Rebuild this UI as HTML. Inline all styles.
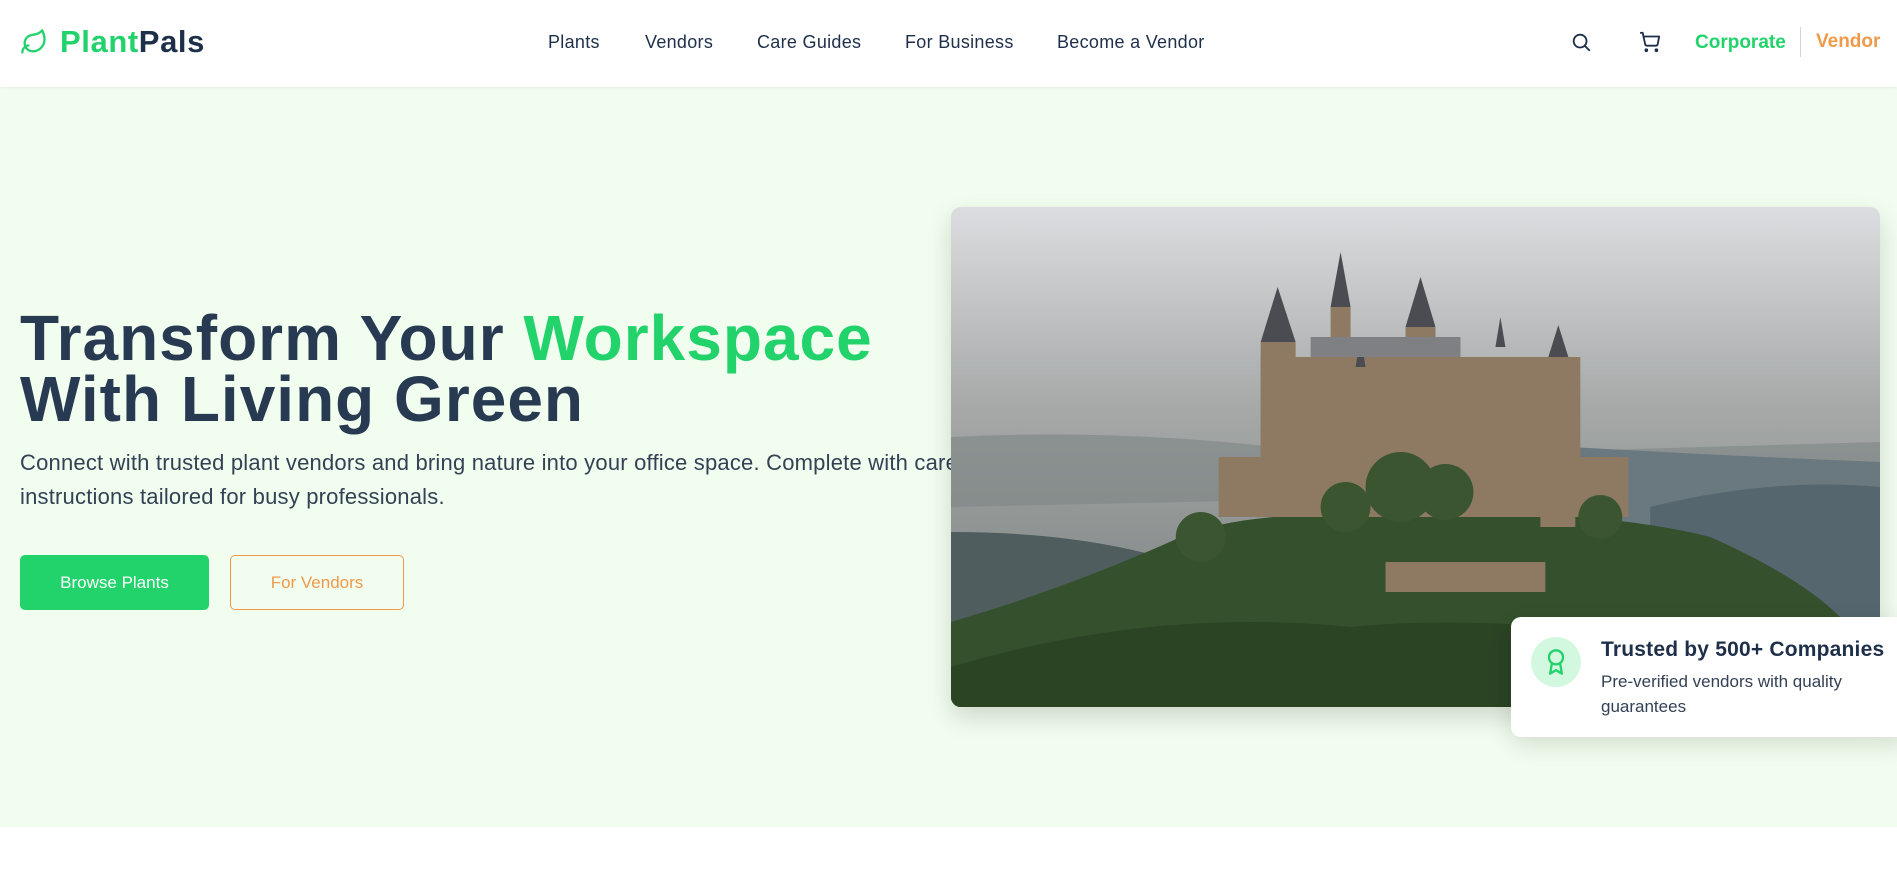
<!DOCTYPE html>
<html><head><meta charset="utf-8"><style>
*{margin:0;padding:0;box-sizing:border-box}
body{width:1897px;height:889px;overflow:hidden;background:#fff;font-family:"Liberation Sans",sans-serif;position:relative}
header{position:absolute;left:0;top:0;width:1897px;height:87px;background:#fff;box-shadow:0 1px 3px rgba(0,0,0,.06);z-index:2}
.logo{position:absolute;left:20px;top:24px;font-weight:bold;font-size:31px;color:#22d36b;letter-spacing:0.6px}
.logo span{color:#1e2f4a}
.nav a{position:absolute;top:32px;font-size:18px;color:#1e2f4a;text-decoration:none;letter-spacing:0.3px}
.hero{position:absolute;left:0;top:87px;width:1897px;height:740px;background:#f1fdee}
h1{position:absolute;left:20px;top:308px;font-size:64px;line-height:61px;color:#273a52;font-weight:bold;letter-spacing:1px}
h1 span{color:#22d36b}
p.sub{position:absolute;left:20px;top:446px;width:960px;font-size:22px;line-height:34px;color:#334155;letter-spacing:0.2px}
.btn{position:absolute;top:555px;height:55px;border-radius:5px;font-size:17px;display:flex;align-items:center;justify-content:center}
.img{position:absolute;left:951px;top:207px;width:929px;height:500px;border-radius:10px;overflow:hidden;box-shadow:0 10px 25px rgba(0,0,0,.15)}
.badge{position:absolute;left:1511px;top:617px;width:400px;height:120px;background:#fff;border-radius:10px;box-shadow:0 8px 24px rgba(0,0,0,.12)}
</style></head><body>
<header>
<svg style="position:absolute;left:20px;top:28px" width="28" height="28" viewBox="0 0 24 24" fill="none" stroke="#22d36b" stroke-width="2" stroke-linecap="round" stroke-linejoin="round"><path d="M11 20A7 7 0 0 1 9.8 6.1C15.5 5 17 4.5 19 2c1 2 2 4.2 2 8 0 5.5-4.8 10-10 10Z"/><path d="M2 21c0-3 1.9-5.4 5.2-6.1"/></svg>
<div class="logo" style="left:60px">Plant<span>Pals</span></div>
<div class="nav">
<a style="left:548px">Plants</a><a style="left:645px">Vendors</a><a style="left:757px">Care Guides</a><a style="left:905px">For Business</a><a style="left:1057px">Become a Vendor</a>
</div>
<svg style="position:absolute;left:1570px;top:31px" width="22" height="22" viewBox="0 0 24 24" fill="none" stroke="#1e2f4a" stroke-width="2" stroke-linecap="round"><circle cx="11" cy="11" r="7"/><path d="m21 21-4.3-4.3"/></svg>
<svg style="position:absolute;left:1639px;top:31px" width="22" height="22" viewBox="0 0 24 24" fill="none" stroke="#1e2f4a" stroke-width="2" stroke-linecap="round" stroke-linejoin="round"><circle cx="8" cy="21" r="1"/><circle cx="19" cy="21" r="1"/><path d="M2 2h2l2.7 12.4a2 2 0 0 0 2 1.6h9.7a2 2 0 0 0 2-1.6L22 6H5.1"/></svg>
<div style="position:absolute;left:1695px;top:32px;font-size:19px;font-weight:bold;color:#22d36b">Corporate</div>
<div style="position:absolute;left:1800px;top:27px;width:1px;height:30px;background:#d1d5db"></div>
<div style="position:absolute;left:1816px;top:31px;font-size:19px;font-weight:bold;color:#ee9a4a">Vendor</div>
</header>
<div class="hero"></div>
<h1>Transform Your <span>Workspace</span><br>With Living Green</h1>
<p class="sub">Connect with trusted plant vendors and bring nature into your office space. Complete with care instructions tailored for busy professionals.</p>
<div class="btn" style="left:20px;width:189px;background:#22d36b;color:#fff">Browse Plants</div>
<div class="btn" style="left:230px;width:174px;border:1px solid #ee9a4a;color:#ee9a4a;background:transparent">For Vendors</div>
<div class="img">
<svg width="929" height="500" viewBox="0 0 930 500" preserveAspectRatio="none">
<defs><linearGradient id="sky" x1="0" y1="0" x2="0" y2="1"><stop offset="0" stop-color="#dcdde0"/><stop offset=".4" stop-color="#a6a9a8"/><stop offset=".7" stop-color="#8a908f"/><stop offset="1" stop-color="#6f7b80"/></linearGradient></defs>
<rect width="930" height="500" fill="url(#sky)"/>
<path d="M0 230 Q200 220 400 250 L930 235 L930 280 L0 300Z" fill="#7d8684" opacity=".6"/>
<path d="M620 240 Q800 250 930 255 L930 500 L600 500Z" fill="#6a7880"/>
<path d="M700 300 Q820 270 930 280 L930 500 L700 500Z" fill="#56666e"/>
<path d="M0 325 Q120 325 210 350 L250 500 L0 500Z" fill="#4f5d5e"/>
<path d="M0 415 Q120 380 230 330 Q300 300 460 310 Q640 300 760 330 Q850 370 890 410 L930 440 L930 500 L0 500Z" fill="#34502c"/>
<path d="M0 460 Q200 400 400 420 Q600 400 930 470 L930 500 L0 500Z" fill="#2b4424"/>
<g fill="#8e7a62">
<rect x="268" y="250" width="410" height="60"/>
<rect x="310" y="150" width="320" height="110"/>
<rect x="310" y="135" width="35" height="150"/>
<rect x="380" y="100" width="20" height="90"/>
<rect x="455" y="120" width="30" height="100"/>
<rect x="590" y="150" width="35" height="170"/>
<rect x="435" y="355" width="160" height="30"/>
</g>
<g fill="#4a4c52">
<path d="M310 135 L327 80 L345 135Z"/><path d="M380 100 L390 45 L400 100Z"/><path d="M455 120 L470 70 L485 120Z"/><path d="M545 140 L550 110 L555 140Z"/><path d="M598 150 L608 118 L618 150Z"/><path d="M405 160 L410 130 L415 160Z"/>
<rect x="360" y="130" width="150" height="20" fill="#7f8084"/>
</g>
<g fill="#3a5530"><circle cx="450" cy="280" r="35"/><circle cx="495" cy="285" r="28"/><circle cx="395" cy="300" r="25"/><circle cx="650" cy="310" r="22"/><circle cx="250" cy="330" r="25"/></g>
</svg></div>
<div class="badge">
<div style="position:absolute;left:20px;top:20px;width:50px;height:50px;border-radius:50%;background:#d2f8e0"></div>
<svg style="position:absolute;left:31px;top:31px" width="28" height="28" viewBox="0 0 24 24" fill="none" stroke="#22d36b" stroke-width="2" stroke-linecap="round" stroke-linejoin="round"><circle cx="12" cy="8" r="6"/><path d="M15.5 12.9 17 22l-5-3-5 3 1.5-9.1"/></svg>
<div style="position:absolute;left:90px;top:21px;font-size:21px;font-weight:bold;color:#1e2f4a;white-space:nowrap;letter-spacing:0.2px">Trusted by 500+ Companies</div>
<div style="position:absolute;left:90px;top:52px;font-size:17px;line-height:25px;color:#334155;width:300px">Pre-verified vendors with quality guarantees</div>
</div>
</body></html>
